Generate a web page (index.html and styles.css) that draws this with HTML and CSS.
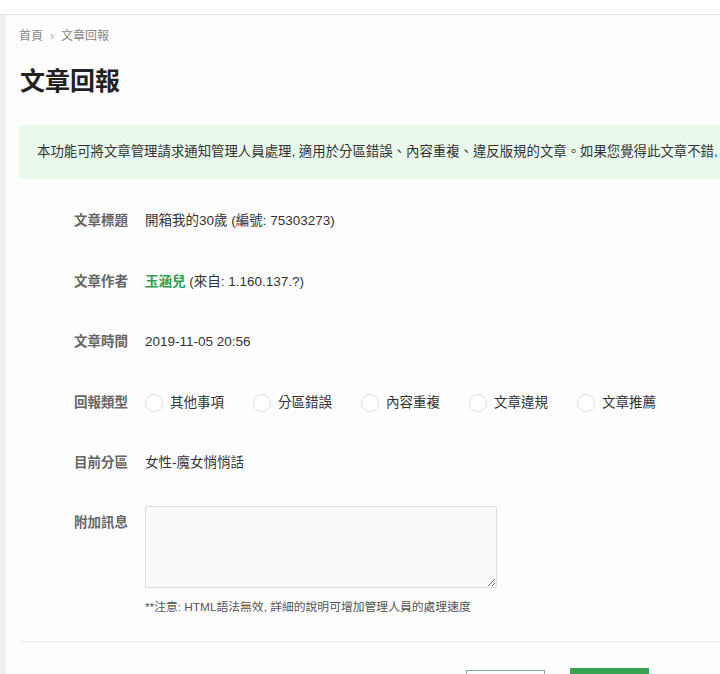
FILE: index.html
```html
<!DOCTYPE html>
<html lang="zh-Hant">
<head>
<meta charset="utf-8">
<title>文章回報</title>
<link rel="stylesheet" href="styles.css">
</head>
<body>
<header class="topbar">
  <nav class="nav">
    <span>首頁</span><span>新聞</span><span>論壇</span><span>生活</span><span>娛樂</span><span>遊戲</span><span>運動</span><span>女性</span><span>美食</span><span>旅遊</span><span>科技</span><span>汽車</span><span>影音</span><span>時尚</span><span>更多</span><span>其他</span>
  </nav>
</header>
<div class="page">
  <div class="side"></div>
  <main class="main">
    <div class="content">
      <div class="crumbs"><span>首頁</span><span class="sep">›</span><span>文章回報</span></div>
      <h1 class="title">文章回報</h1>
      <div class="notice">本功能可將文章管理請求通知管理人員處理, 適用於分區錯誤、內容重複、違反版規的文章。如果您覺得此文章不錯, 可以推薦給管理人員, 讓更多人看到這篇好文章。</div>
      <form class="form">
        <div class="row">
          <div class="label">文章標題</div>
          <div class="value">開箱我的30歲 (編號: 75303273)</div>
        </div>
        <div class="row">
          <div class="label">文章作者</div>
          <div class="value"><a class="author">玉涵兒</a> (來自: 1.160.137.?)</div>
        </div>
        <div class="row">
          <div class="label">文章時間</div>
          <div class="value">2019-11-05 20:56</div>
        </div>
        <div class="row">
          <div class="label">回報類型</div>
          <div class="value radios">
            <label class="radio"><span class="circle"></span>其他事項</label>
            <label class="radio"><span class="circle"></span>分區錯誤</label>
            <label class="radio"><span class="circle"></span>內容重複</label>
            <label class="radio"><span class="circle"></span>文章違規</label>
            <label class="radio"><span class="circle"></span>文章推薦</label>
          </div>
        </div>
        <div class="row">
          <div class="label">目前分區</div>
          <div class="value">女性-魔女悄悄話</div>
        </div>
        <div class="row row-msg">
          <div class="label">附加訊息</div>
          <div class="value">
            <textarea class="msg"></textarea>
            <div class="hint">**注意: HTML語法無效, 詳細的說明可增加管理人員的處理速度</div>
          </div>
        </div>
      </form>
      <div class="divider"></div>
      <div class="actions">
        <button type="button" class="btn btn-outline">取消</button>
        <button type="button" class="btn btn-primary">送出</button>
      </div>
    </div>
  </main>
</div>
</body>
</html>
```
FILE: styles.css
```css
html, body {
  margin: 0;
  padding: 0;
  height: 100%;
  overflow: hidden;
  background: #fdfdfd;
  font-family: "Liberation Sans", "Noto Sans CJK TC", sans-serif;
  color: #333;
}
.topbar {
  height: 14px;
  background: #fff;
  border-bottom: 1px solid #e3e3e3;
  overflow: hidden;
}
.nav {
  display: flex;
  gap: 19px;
  padding-left: 24px;
  margin-top: -8px;
  font-size: 8px;
  line-height: 10px;
  color: #b4b4b4;
  white-space: nowrap;
}
.page {
  display: flex;
  height: calc(100% - 15px);
}
.side {
  width: 6px;
  flex: none;
  background: #f0f0f0;
}
.main {
  flex: 1;
  overflow: hidden;
  padding-left: 13px;
}
.content {
  width: 1077px;
}
.crumbs {
  margin-top: 12px;
  font-size: 12px;
  line-height: 18px;
  color: #888;
  display: flex;
  gap: 7px;
}
.crumbs .sep {
  color: #aaa;
}
.title {
  margin: 20px 0 0 1px;
  font-size: 25px;
  line-height: 32px;
  font-weight: bold;
  color: #222;
}
.notice {
  margin-top: 28px;
  background: #e9f9ec;
  padding: 17px 18px;
  font-size: 13.4px;
  line-height: 20px;
  color: #333;
  white-space: nowrap;
}
.form {
  margin-top: 12px;
}
.row {
  display: flex;
  padding: 20px 0 20.5px;
  line-height: 20px;
  font-size: 13.5px;
}
.label {
  width: 109px;
  flex: none;
  text-align: right;
  color: #666;
  font-weight: bold;
  font-size: 13.5px;
}
.value {
  margin-left: 17px;
  color: #333;
}
.author {
  color: #2e9e4a;
  font-weight: bold;
}
.radios {
  display: flex;
}
.radio {
  display: flex;
  align-items: center;
  gap: 7px;
  width: 108px;
}
.circle {
  width: 16px;
  height: 16px;
  border: 1px solid #dedede;
  border-radius: 50%;
  background: #fff;
}
.row-msg {
  padding: 12.5px 0 25px;
}
.row-msg .label {
  padding-top: 7px;
}
.msg {
  display: block;
  width: 352px;
  height: 82px;
  box-sizing: border-box;
  border: 1px solid #dcdcdc;
  border-radius: 2px;
  background: #fafafa;
  resize: vertical;
  margin: 0;
}
.hint {
  margin-top: 10px;
  font-size: 11.8px;
  line-height: 18px;
  color: #555;
}
.divider {
  height: 1px;
  background: #ececec;
  margin-left: 1px;
}
.actions {
  display: flex;
  gap: 25px;
  padding-left: 447px;
  padding-top: 26px;
}
.btn {
  width: 79px;
  height: 36px;
  font-size: 14px;
  font-family: inherit;
  border-radius: 0;
}
.btn-outline {
  margin-top: 2px;
  background: #fff;
  border: 1px solid #8aa896;
  color: #4a7a5a;
}
.btn-primary {
  background: #37a352;
  border: 1px solid #37a352;
  color: #fff;
}
```
